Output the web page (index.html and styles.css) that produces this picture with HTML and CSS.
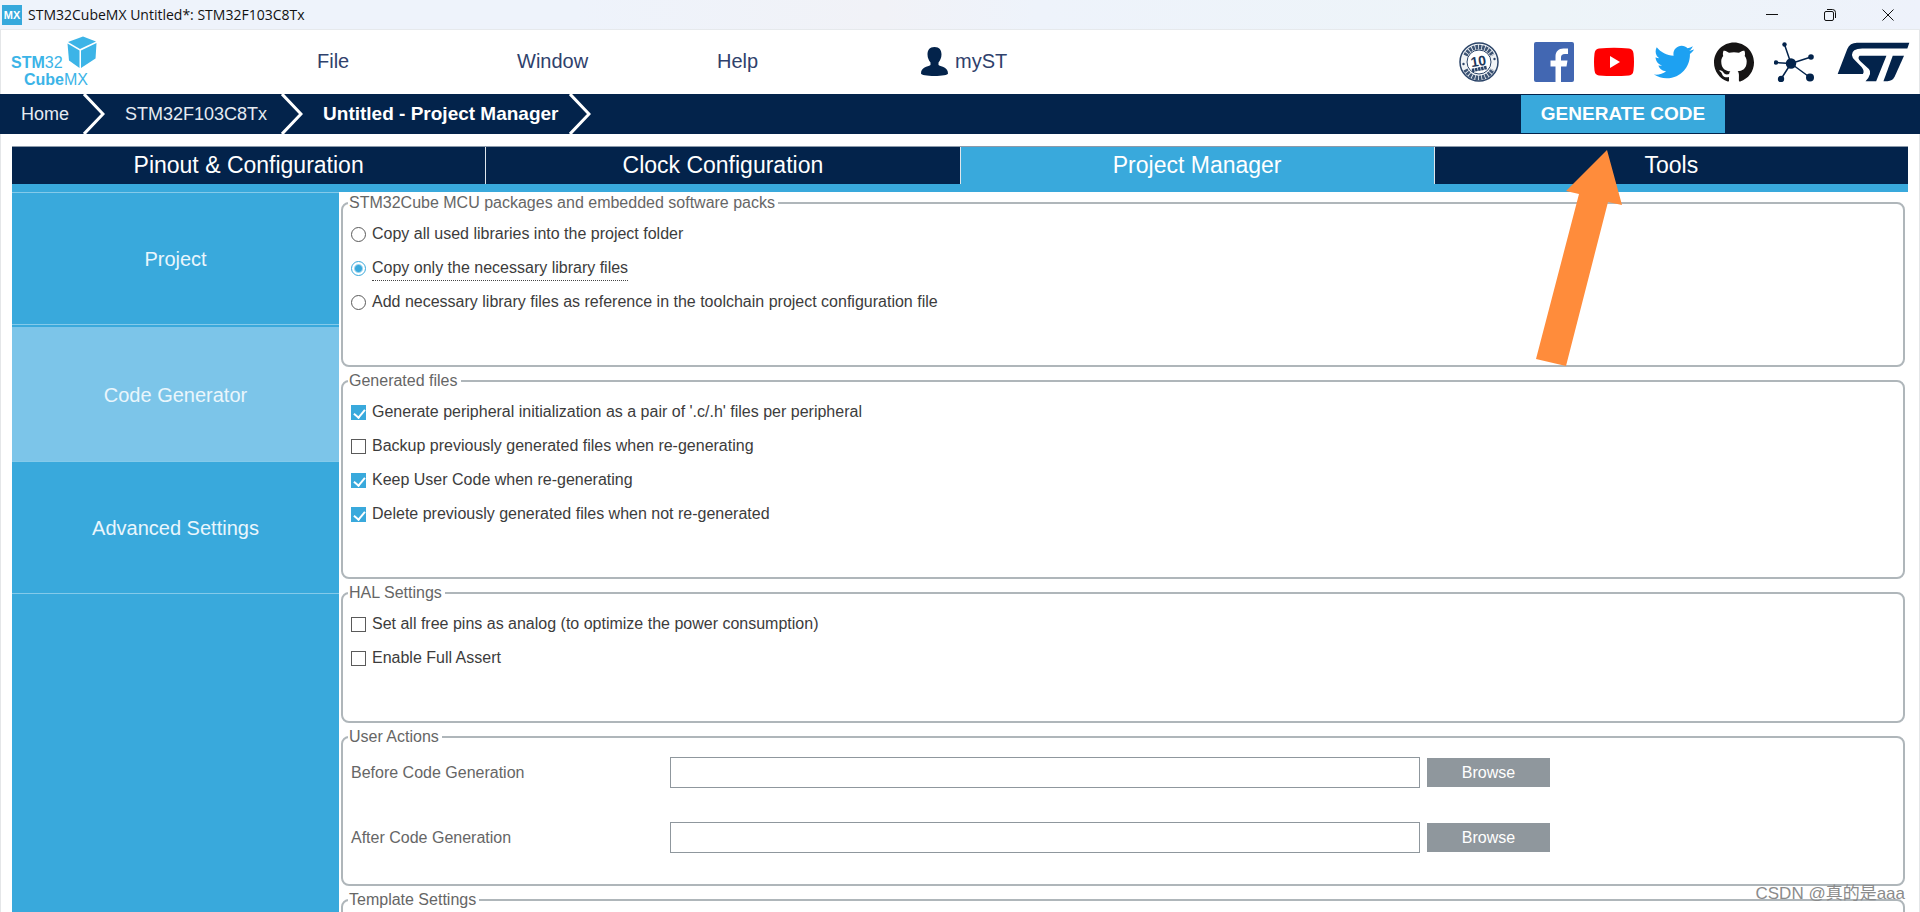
FILE: index.html
```html
<!DOCTYPE html>
<html lang="en">
<head>
<meta charset="utf-8">
<title>STM32CubeMX Untitled*: STM32F103C8Tx</title>
<link rel="stylesheet" href="styles.css">
</head>
<body>
<div class="window">
  <header class="titlebar">
    <svg class="app-icon" viewBox="0 0 20 20" aria-hidden="true"><rect width="20" height="20" fill="#36a9dc"/><text x="10" y="14" text-anchor="middle" class="app-icon-text">MX</text></svg>
    <span class="title">STM32CubeMX Untitled*: STM32F103C8Tx</span>
    <div class="window-controls">
      <button type="button" aria-label="Minimize"><svg viewBox="0 0 12 12"><path d="M0 5.500h12"/></svg></button>
      <button type="button" aria-label="Restore"><svg viewBox="0 0 12 12"><rect x=".5" y="2.500" width="9" height="9" rx="1.500"/><path d="M3 .5h5.500a3 3 0 0 1 3 3V9"/></svg></button>
      <button type="button" aria-label="Close"><svg viewBox="0 0 12 12"><path d="M.5.5l11 11M11.500.5l-11 11"/></svg></button>
    </div>
  </header>

  <div class="menubar">
    <svg class="logo" viewBox="0 0 90 54" aria-label="STM32CubeMX">
      <path d="M72 1.500L85 6.500 69 14 57 7z" fill="#3cb4e7"/>
      <path d="M56.500 8.500L68.500 15.500V33L58 25.500z" fill="#3cb4e7"/>
      <path d="M70 15.500L85.500 8 84.500 23.500 70 33z" fill="#3cb4e7"/>
      <text x="0" y="33" class="logo-text"><tspan class="logo-bold">STM</tspan>32</text>
      <text x="13" y="50" class="logo-text"><tspan class="logo-bold">Cube</tspan>MX</text>
    </svg>
    <nav class="menu">
      <button type="button">File</button>
      <button type="button">Window</button>
      <button type="button">Help</button>
      <button type="button" class="account"><svg viewBox="0 0 27 29" aria-hidden="true"><path d="M13.500 0c5 0 7 3 7 7.500 0 3.500-1.500 6-3 8v2.500c3 2 9.500 2 9.500 8.500 0 1.500-6 2.500-13.500 2.500S0 28 0 26.500C0 20 6.500 20 9.500 18v-2.500c-1.500-2-3-4.500-3-8 0-4.500 2-7.500 7-7.500z" fill="#03234b"/></svg>myST</button>
    </nav>
    <div class="links">
      <a href="#" class="seal" aria-label="10 years longevity commitment">
        <svg viewBox="0 0 40 40"><circle cx="20" cy="20" r="19" fill="#f0f3f6" stroke="#2b4468" stroke-width="1.500"/><path d="M6.500 13.500A15 15 0 0 1 33.500 13.500M6.500 27.500A15 15 0 0 0 33.500 27.500" fill="none" stroke="#3d5474" stroke-width="4.500" stroke-dasharray="2.500 .8"/><circle cx="20" cy="20" r="12" fill="#fff" stroke="#2b4468"/><circle cx="4.500" cy="22" r="1.200" fill="#2b4468"/><circle cx="35.500" cy="17" r="1.200" fill="#2b4468"/><text x="19.500" y="24" text-anchor="middle" class="seal-text" transform="rotate(-9 20 20)">10</text><path d="M13 28.500l15-3" stroke="#2b4468" stroke-width="3.500" stroke-dasharray="2.500 .6"/></svg>
      </a>
      <a href="#" aria-label="Facebook"><svg viewBox="0 0 40 40"><rect width="40" height="40" rx="2" fill="#4267b2"/><path d="M21.500 40V24.500h-5v-6h5v-4c0-5 3-8 8-8h4.500V12h-3c-3 0-4 1.500-4 3.500v3h6.500l-1 6h-5.500V40z" fill="#fff"/></svg></a>
      <a href="#" aria-label="YouTube"><svg viewBox="0 0 40 40"><path d="M5 6.500q15-1.500 30 0 4 .5 4.500 5 1 8.500 0 17-.5 4.500-4.500 5-15 1-30 0-4-.5-4.500-5-1-8.500 0-17 .5-4.500 4.500-5z" fill="#f00"/><path d="M16 14l10 6-10 6z" fill="#fff"/></svg></a>
      <a href="#" aria-label="Twitter"><svg viewBox="0 0 24 24"><path fill="#1da1f2" d="M23.954 4.569c-.885.389-1.830.654-2.825.775 1.014-.611 1.794-1.574 2.163-2.723-.951.555-2.005.959-3.127 1.184-.896-.959-2.173-1.559-3.591-1.559-2.717 0-4.920 2.203-4.920 4.917 0 .39.045.765.127 1.124C7.691 8.094 4.066 6.130 1.640 3.161c-.427.722-.666 1.561-.666 2.475 0 1.710.87 3.213 2.188 4.096-.807-.026-1.566-.248-2.228-.616v.061c0 2.385 1.693 4.374 3.946 4.827-.413.111-.849.171-1.296.171-.314 0-.615-.03-.916-.086.631 1.953 2.445 3.377 4.604 3.417-1.680 1.319-3.809 2.105-6.102 2.105-.39 0-.779-.023-1.170-.067 2.189 1.394 4.768 2.209 7.557 2.209 9.054 0 13.999-7.496 13.999-13.986 0-.209 0-.42-.015-.63.961-.689 1.800-1.560 2.460-2.548z"/></svg></a>
      <a href="#" aria-label="GitHub"><svg viewBox="0 0 24 24"><path fill="#171515" d="M12 .297c-6.630 0-12 5.373-12 12 0 5.303 3.438 9.800 8.205 11.385.6.113.82-.258.82-.577 0-.285-.01-1.040-.015-2.040-3.338.724-4.042-1.610-4.042-1.610C4.422 18.070 3.633 17.700 3.633 17.700c-1.087-.744.084-.729.084-.729 1.205.084 1.838 1.236 1.838 1.236 1.070 1.835 2.809 1.305 3.495.998.108-.776.417-1.305.76-1.605-2.665-.3-5.466-1.332-5.466-5.930 0-1.310.465-2.380 1.235-3.220-.135-.303-.54-1.523.105-3.176 0 0 1.005-.322 3.300 1.230.96-.267 1.980-.399 3-.405 1.020.006 2.040.138 3 .405 2.280-1.552 3.285-1.230 3.285-1.230.645 1.653.24 2.873.12 3.176.765.84 1.230 1.910 1.230 3.220 0 4.610-2.805 5.625-5.475 5.920.42.36.81 1.096.81 2.220 0 1.606-.015 2.896-.015 3.286 0 .315.21.69.825.57C20.565 22.092 24 17.592 24 12.297c0-6.627-5.373-12-12-12"/></svg></a>
      <a href="#" aria-label="ST community"><svg viewBox="0 0 40 40"><path d="M17 21.500L10.500 2.500M17 21.500L37 15M17 21.500L36 35.500M17 21.500L7 37M17 21.500L2 20.500" stroke="#03234b" stroke-width="1.500"/><g fill="#03234b"><circle cx="17" cy="21.500" r="5.200"/><circle cx="10.500" cy="2.500" r="2.200"/><circle cx="37" cy="15" r="2.800"/><circle cx="36" cy="35.500" r="4"/><circle cx="7" cy="37" r="3.200"/><circle cx="2" cy="20.500" r="2.200"/></g></svg></a>
      <a href="#" class="st" aria-label="STMicroelectronics"><svg viewBox="1190 124 220 120"><g fill="#03234b"><path d="M1192 220L1221 145Q1229 126 1250 126H1408L1402 143H1266Q1234 144 1235 163 1236 172 1244 179L1264 199Q1274 211 1268 220z"/><path d="M1258 165H1339L1308 242H1276Q1298 218 1286 205L1262 183Q1250 172 1258 165z"/><path d="M1358 165H1392L1364 228Q1357 242 1342 242H1330z"/></g></svg></a>
    </div>
  </div>

  <div class="breadcrumb">
    <nav class="crumbs">
      <a href="#">Home</a>
      <svg class="chevron" viewBox="0 0 22 40" aria-hidden="true"><path d="M1 0l19 20L1 40"/></svg>
      <a href="#">STM32F103C8Tx</a>
      <svg class="chevron" viewBox="0 0 22 40" aria-hidden="true"><path d="M1 0l19 20L1 40"/></svg>
      <a href="#" class="current">Untitled - Project Manager</a>
      <svg class="chevron" viewBox="0 0 22 40" aria-hidden="true"><path d="M1 0l19 20L1 40"/></svg>
    </nav>
    <button type="button" class="generate">GENERATE CODE</button>
  </div>

  <main class="workspace">
    <div class="tabs" role="tablist">
      <button type="button" role="tab">Pinout &amp; Configuration</button>
      <button type="button" role="tab">Clock Configuration</button>
      <button type="button" role="tab" aria-selected="true" class="active">Project Manager</button>
      <button type="button" role="tab">Tools</button>
    </div>
    <div class="body">
      <aside class="sidebar">
        <button type="button">Project</button>
        <button type="button" class="selected">Code Generator</button>
        <button type="button">Advanced Settings</button>
      </aside>
      <form class="settings">
        <fieldset>
          <legend>STM32Cube MCU packages and embedded software packs</legend>
          <label class="option"><input type="radio" name="packs"><span>Copy all used libraries into the project folder</span></label>
          <label class="option"><input type="radio" name="packs" checked><span class="focused">Copy only the necessary library files</span></label>
          <label class="option"><input type="radio" name="packs"><span>Add necessary library files as reference in the toolchain project configuration file</span></label>
        </fieldset>
        <fieldset>
          <legend>Generated files</legend>
          <label class="option"><input type="checkbox" checked><span>Generate peripheral initialization as a pair of '.c/.h' files per peripheral</span></label>
          <label class="option"><input type="checkbox"><span>Backup previously generated files when re-generating</span></label>
          <label class="option"><input type="checkbox" checked><span>Keep User Code when re-generating</span></label>
          <label class="option"><input type="checkbox" checked><span>Delete previously generated files when not re-generated</span></label>
        </fieldset>
        <fieldset>
          <legend>HAL Settings</legend>
          <label class="option"><input type="checkbox"><span>Set all free pins as analog (to optimize the power consumption)</span></label>
          <label class="option"><input type="checkbox"><span>Enable Full Assert</span></label>
        </fieldset>
        <fieldset class="actions">
          <legend>User Actions</legend>
          <div class="action">
            <label for="before">Before Code Generation</label>
            <input type="text" id="before">
            <button type="button">Browse</button>
          </div>
          <div class="action">
            <label for="after">After Code Generation</label>
            <input type="text" id="after">
            <button type="button">Browse</button>
          </div>
        </fieldset>
        <fieldset>
          <legend>Template Settings</legend>
        </fieldset>
      </form>
    </div>
  </main>

  <svg class="pointer-arrow" viewBox="0 0 86 217" aria-hidden="true"><path d="M71 1L30 42l13 3L0 210l30 7L72 53l14 3z" fill="#ff8c3b"/></svg>
  <div class="watermark">CSDN @真的是aaa</div>
</div>
</body>
</html>
```
FILE: styles.css
```css
* { box-sizing: border-box; }

body {
  margin: 0;
  font-family: "Liberation Sans", Arial, sans-serif;
  font-size: 16px;
  color: #3c3c3c;
  background: #fff;
}

button {
  margin: 0;
  padding: 0;
  border: 0;
  background: none;
  font: inherit;
  color: inherit;
}

a { color: inherit; text-decoration: none; }

.window {
  position: relative;
  display: flex;
  flex-direction: column;
  height: 100vh;
  overflow: hidden;
  box-shadow: inset 1px 0 #e4e6e8, inset -1px 0 #e4e6e8;
}

/* Title bar */
.titlebar {
  display: flex;
  align-items: center;
  flex: none;
  height: 30px;
  padding-left: 2px;
  background: linear-gradient(90deg, #eef3fb 30%, #f1f2f7 46%, #eef3fb 54%, #edf4f8 80%, #eef2fb);
  border-bottom: 1px solid #e6e9ec;
}
.app-icon { width: 20px; height: 20px; }
.app-icon-text { font: bold 11px "Liberation Sans", sans-serif; fill: #fff; }
.title {
  margin-left: 6px;
  font-family: "Open Sans", "Noto Sans", sans-serif;
  font-size: 14px;
  color: #111;
}
.window-controls { display: flex; margin-left: auto; padding-right: 3px; }
.window-controls button {
  display: grid;
  place-items: center;
  width: 58px;
  height: 28px;
}
.window-controls svg { width: 12px; height: 12px; fill: none; stroke: #111; }

/* Menu bar */
.menubar {
  display: flex;
  align-items: center;
  flex: none;
  height: 64px;
  padding: 0 10px 0 11px;
}
.logo { flex: none; width: 90px; height: 54px; }
.logo-text { font: 16px "Liberation Sans", sans-serif; fill: #3cb4e7; }
.logo-bold { font-weight: bold; }
.menu { display: flex; margin-left: 216px; }
.menu button {
  display: flex;
  align-items: center;
  width: 200px;
  height: 40px;
  padding-bottom: 2px;
  font-size: 20px;
  color: #2f416c;
}
.menu .account { gap: 7px; padding-left: 4px; }
.account svg { width: 27px; height: 29px; }
.links { display: flex; gap: 20px; margin-left: auto; }
.links a { width: 40px; height: 40px; }
.links svg { display: block; width: 100%; height: 100%; }
.links .seal { margin-right: 15px; }
.links .st { width: 73px; margin-left: 3px; }
.seal-text { font: bold 14px "Liberation Sans", sans-serif; fill: #1c365a; }

/* Breadcrumb */
.breadcrumb {
  display: flex;
  align-items: center;
  flex: none;
  height: 40px;
  background: #03234b;
  color: #e6ebf2;
}
.crumbs {
  display: flex;
  align-items: center;
  flex: 1;
  padding-left: 21px;
  font-size: 18px;
}
.crumbs .current { font-size: 19px; font-weight: bold; color: #fff; }
.chevron { width: 22px; height: 40px; margin: 0 20px 0 14px; fill: none; stroke: #fff; stroke-width: 3; }
.current + .chevron { margin-left: 10px; }
.generate {
  width: 204px;
  height: 38px;
  margin-right: 195px;
  background: #39a9dc;
  font-size: 19px;
  font-weight: bold;
  color: #fff;
}

/* Tabs */
.workspace {
  display: flex;
  flex-direction: column;
  flex: 1;
  min-height: 0;
  padding: 12px 12px 0;
}
.tabs {
  display: grid;
  grid-template-columns: repeat(4, 1fr);
  gap: 1px;
  flex: none;
  background: #dfe6ec;
  border-top: 1px solid #8c9aaa;
  border-bottom: 8px solid #39a9dc;
}
.tabs button { height: 37px; background: #03234b; font-size: 23px; color: #fff; }
.tabs .active { background: #39a9dc; }

/* Body */
.body { display: flex; flex: 1; min-height: 0; }
.sidebar {
  display: flex;
  flex-direction: column;
  flex: none;
  width: 327px;
  background: #39a9dc;
  border-top: 1px solid #84caea;
}
.sidebar button {
  height: 135px;
  padding-top: 2px;
  border-bottom: 1px solid #84caea;
  font-size: 20px;
  color: #eaf6fc;
}
.sidebar button:first-child { height: 132px; margin-bottom: 2px; }
.sidebar .selected { background: #7cc5e9; }
.sidebar button:last-child { height: 132px; }

.settings { flex: 1; min-width: 0; padding: 0 3px 0 2px; }
fieldset {
  min-width: 0;
  margin: 0 0 3px;
  padding: 3px 8px 46px;
  border: 2px solid #afb6ba;
  border-radius: 8px;
}
legend {
  margin-left: -3px;
  padding: 0 3px 0 1px;
  line-height: 22px;
  color: #666;
}
.option { display: flex; align-items: center; width: fit-content; height: 34px; gap: 6px; }
.focused { border-bottom: 1px dotted #444; padding: 4px 0 3px; }

.option input {
  appearance: none;
  flex: none;
  width: 15px;
  height: 15px;
  margin: 0;
  border: 1px solid #5a5a5a;
  background: #fff;
}
.option input[type="radio"] { border-radius: 50%; }
.option input[type="radio"]:checked {
  border-color: #39a9dc;
  background: radial-gradient(circle, #39a9dc 3px, #fff 5px);
}
.option input[type="checkbox"]:checked { position: relative; border-color: #39a9dc; background: #39a9dc; }
.option input[type="checkbox"]:checked::after {
  content: "";
  position: absolute;
  left: 4px;
  top: 1px;
  width: 5px;
  height: 9px;
  border: solid #fff;
  border-width: 0 2px 2px 0;
  transform: rotate(40deg);
}

.actions { padding: 9px 8px 31px; }
.action {
  display: grid;
  grid-template-columns: 319px minmax(0, 750px) 123px;
  align-items: center;
  color: #666;
}
.action + .action { margin-top: 34px; }
.action input {
  height: 31px;
  padding: 0 8px;
  border: 1px solid #8f979d;
  font: inherit;
  outline: 0;
}
.action button { height: 29px; margin: 0 -7px 0 7px; background: #8f979d; color: #fff; }

/* Overlays */
.pointer-arrow { position: absolute; left: 1536px; top: 149px; width: 86px; height: 217px; }
.watermark {
  position: absolute;
  right: 15px;
  bottom: 6px;
  font-family: "Liberation Sans", "Noto Sans CJK SC", sans-serif;
  font-size: 17px;
  line-height: 24px;
  color: #8b8b8b;
}
```
